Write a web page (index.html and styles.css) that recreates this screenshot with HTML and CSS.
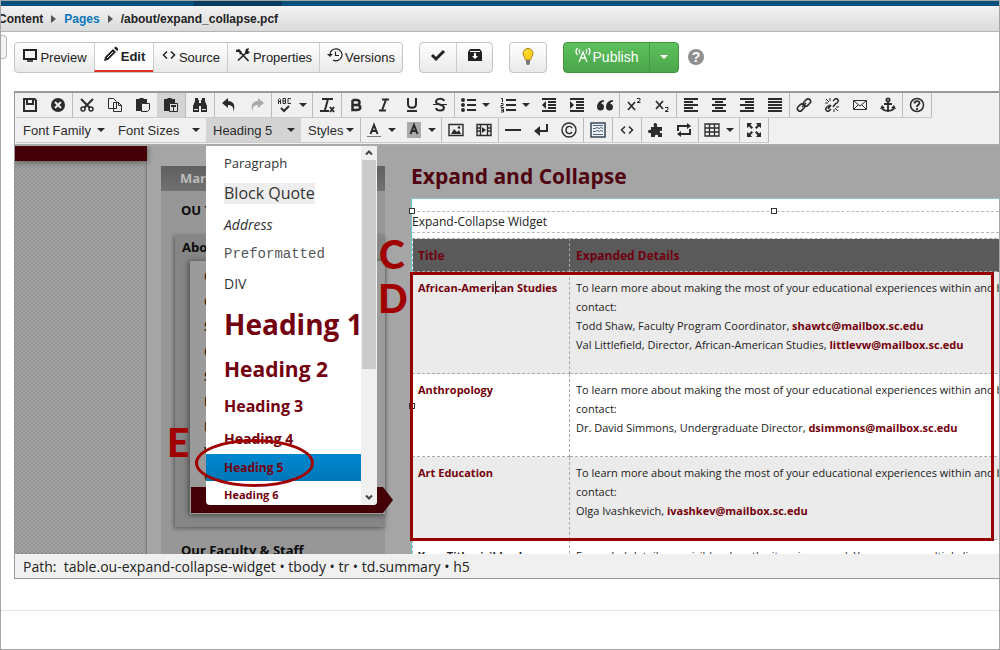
FILE: index.html
```html
<!DOCTYPE html>
<html lang="en">
<head>
<meta charset="utf-8">
<title>/about/expand_collapse.pcf</title>
<link rel="stylesheet" href="styles.css">
</head>
<body>
<svg class="sprite" aria-hidden="true">
  <symbol id="monitor" viewBox="0 0 16 16"><path fill="none" stroke="currentColor" stroke-width="2" d="M2 3h12v9H2z"/><path d="M5 13h6v2H5z" opacity=".8"/></symbol>
  <symbol id="pencil" viewBox="0 0 16 16"><path d="M1 15l1-4 8-8 3 3-8 8zM11 2l1-1c1-1 4 2 3 3l-1 1z"/><path stroke="#fff" d="M4 12l6-6"/></symbol>
  <symbol id="code" viewBox="0 0 16 16"><path fill="none" stroke="currentColor" stroke-width="1.5" d="M6 4.500L2.500 8L6 11.500M10 4.500L13.500 8L10 11.500"/></symbol>
  <symbol id="tools" viewBox="0 0 16 16"><path fill="none" stroke="currentColor" stroke-width="1.700" d="M3 13.500L11 6M6 6l7.500 8"/><path d="M1 3l3-1 3 3-2 3-1-3-3 0zM10 5l1-3 3-1-1 3 2 1-2 2-3 0z"/></symbol>
  <symbol id="history" viewBox="0 0 16 16"><path fill="none" stroke="currentColor" stroke-width="1.200" d="M3 8a6 6 0 1 1 3 5M8.500 4.500v4H12"/><path d="M0 7h6L3 10z"/></symbol>
  <symbol id="check" viewBox="0 0 16 16"><path fill="none" stroke="currentColor" stroke-width="3" d="M2 8l4 4 8-8"/></symbol>
  <symbol id="archive" viewBox="0 0 16 16"><path d="M3 2h10l2 3v9H1V5z"/><path fill="#fff" d="M7 6h2v3h2l-3 3-3-3h2zM3 4h10v1H3z"/></symbol>
  <symbol id="bulb" viewBox="0 0 16 18"><path fill="#ffd21c" stroke="#a8842a" d="M5.500 12C5 9 3 8 3 5.500a5 5 0 0 1 10 0C13 8 11 9 10.500 12z"/><path fill="#777" d="M6 12h4v3l-1 2H7l-1-2z"/><path fill="none" stroke="#fff29a" d="M6 5c0-1 1-2 2-2"/></symbol>
  <symbol id="tower" viewBox="0 0 16 16"><path fill="none" stroke="currentColor" stroke-width="1.300" d="M4 15L8 5l4 10M6 11h4M5 2.500q-1.500 2 0 4M11 2.500q1.500 2 0 4M2.500 1q-3 3.500 0 7M13.500 1q3 3.500 0 7"/></symbol>
  <symbol id="save" viewBox="0 0 16 16"><path d="M1 1h12l2 2v12H1zM3 3v10h10V4l-1-1v5H4V3zM6 3v3h4V3z" fill-rule="evenodd"/></symbol>
  <symbol id="cancel" viewBox="0 0 16 16"><circle cx="8" cy="8" r="7"/><path stroke="#eee" stroke-width="2" d="M5 5l6 6M11 5l-6 6"/></symbol>
  <symbol id="cut" viewBox="0 0 16 16"><path fill="none" stroke="currentColor" stroke-width="2" d="M2 2l9 9M14 2l-9 9"/><g fill="none" stroke="currentColor" stroke-width="1.500"><circle cx="4" cy="12" r="2"/><circle cx="12" cy="12" r="2"/></g></symbol>
  <symbol id="copy" viewBox="0 0 16 16"><path fill="#f0f0f0" stroke="currentColor" d="M1.500 1.500h5l3 3v7h-8zM6.500 5.500h5l3 3v6h-8zM11.500 5.500v3h3"/></symbol>
  <symbol id="paste" viewBox="0 0 16 16"><path d="M1 2h3l1-1h3l1 1h3v4H6v8H1z"/><path fill="#f0f0f0" stroke="currentColor" d="M6.500 6.500h8v6l-2 2h-6z"/></symbol>
  <symbol id="pastetext" viewBox="0 0 16 16"><path d="M1 2h3l1-1h3l1 1h3v4H6v8H1z"/><path fill="#ddd" stroke="currentColor" d="M6.500 6.500h8v8h-8z"/><path d="M8 8h5v2h-2v4h-1v-4H8z"/></symbol>
  <symbol id="find" viewBox="0 0 16 16"><path d="M3 1h3v2h1v3h2V3h1V1h3v3l2 5v6H9V9H7v6H1V9l2-5z"/><path stroke="#eee" d="M2 12.500h4M10 12.500h4"/></symbol>
  <symbol id="undo" viewBox="0 0 16 16"><path d="M1 6l6-5v3c6 0 8 5 5 11 1-5-1-7-5-7v3z"/></symbol>
  <symbol id="redo" viewBox="0 0 16 16"><path d="M15 6L9 1v3C3 4 1 9 4 15c-1-5 1-7 5-7v3z"/></symbol>
  <symbol id="spell" viewBox="0 0 16 16"><path fill="none" stroke="currentColor" d="M1.500 7V2.500l1-1 1 1V7M1.500 4.500h2M6 1.500v5h2.500v-5H6M6 4h2.500M14 2l-1-.500h-2v5h3"/><path fill="none" stroke="currentColor" stroke-width="2" d="M4 11l3 3 5-5"/></symbol>
  <symbol id="clear" viewBox="0 0 16 16"><path fill="none" stroke="currentColor" stroke-width="2" d="M3 2h11M9 2L6 13M1 14h9M11 10l4 5M15 10l-4 5"/></symbol>
  <symbol id="bold" viewBox="0 0 16 16"><path fill="none" stroke="currentColor" stroke-width="2.500" d="M4.500 3h4c4 0 4 5 0 5h-4V3v10h4c5 0 5-5 0-5"/></symbol>
  <symbol id="italic" viewBox="0 0 16 16"><path fill="none" stroke="currentColor" stroke-width="2" d="M6 2.500h7M3 13.500h7M10 2.500l-4 11"/></symbol>
  <symbol id="underline" viewBox="0 0 16 16"><path fill="none" stroke="currentColor" stroke-width="2" d="M4 1v6c0 5 8 5 8 0V1"/><path d="M3 13h10v2H3z"/></symbol>
  <symbol id="strike" viewBox="0 0 16 16"><path fill="none" stroke="currentColor" stroke-width="2" d="M12 4C11 1 4 1 4 5c0 3 8 2 8 5.500 0 4-7 4-8 .500"/><path d="M1 7h14v1H1z"/></symbol>
  <symbol id="bullets" viewBox="0 0 16 16"><circle cx="3" cy="3" r="2"/><circle cx="3" cy="8" r="2"/><circle cx="3" cy="13" r="2"/><path d="M7 2h9v2H7zM7 7h9v2H7zM7 12h9v2H7z"/></symbol>
  <symbol id="numbers" viewBox="0 0 16 16"><path d="M6 2h10v2H6zM6 7h10v2H6zM6 12h10v2H6z"/><path fill="none" stroke="currentColor" d="M1 1.500h1.500V5M1 6.500h2v2H1v2h3M1 12h2.500v3H1M1.500 13.500h2"/></symbol>
  <symbol id="outdent" viewBox="0 0 16 16"><path d="M1 1h14v2H1zM7 4h8v2H7zM7 7h8v2H7zM7 10h8v2H7zM1 13h14v2H1zM5 4v8L1 8z"/></symbol>
  <symbol id="indent" viewBox="0 0 16 16"><path d="M1 1h14v2H1zM7 4h8v2H7zM7 7h8v2H7zM7 10h8v2H7zM1 13h14v2H1zM1 4v8l4-4z"/></symbol>
  <symbol id="quote" viewBox="0 0 16 16"><path d="M7 3C3 3 0 6 0 10a3.500 3.500 0 1 0 4-3.500Q5 5 7 4.500zM16 3c-4 0-7 3-7 7a3.500 3.500 0 1 0 4-3.500q1-1.500 3-2z"/></symbol>
  <symbol id="sup" viewBox="0 0 16 16"><path fill="none" stroke="currentColor" stroke-width="1.700" d="M2 5l7 8M9 5l-7 8"/><path fill="none" stroke="currentColor" d="M11 1.500h3v2l-3 2h3.500"/></symbol>
  <symbol id="sub" viewBox="0 0 16 16"><path fill="none" stroke="currentColor" stroke-width="1.700" d="M2 4l7 8M9 4l-7 8"/><path fill="none" stroke="currentColor" d="M11 10.500h3v2l-3 2h3.500"/></symbol>
  <symbol id="left" viewBox="0 0 16 16"><path d="M1 1h14v2H1zM1 4h9v2H1zM1 7h14v2H1zM1 10h9v2H1zM1 13h14v2H1z"/></symbol>
  <symbol id="center" viewBox="0 0 16 16"><path d="M1 1h14v2H1zM4 4h8v2H4zM1 7h14v2H1zM4 10h8v2H4zM1 13h14v2H1z"/></symbol>
  <symbol id="right" viewBox="0 0 16 16"><path d="M1 1h14v2H1zM6 4h9v2H6zM1 7h14v2H1zM6 10h9v2H6zM1 13h14v2H1z"/></symbol>
  <symbol id="justify" viewBox="0 0 16 16"><path d="M1 1h14v2H1zM1 4h14v2H1zM1 7h14v2H1zM1 10h14v2H1zM1 13h14v2H1z"/></symbol>
  <symbol id="link" viewBox="0 0 16 16"><g fill="none" stroke="currentColor" stroke-width="1.600"><rect x="7" y="3" width="8" height="5" rx="2.500" transform="rotate(-45 11 5.500)"/><rect x="1" y="8" width="8" height="5" rx="2.500" transform="rotate(-45 5 10.500)"/><path d="M6 10l4-4"/></g></symbol>
  <symbol id="unlink" viewBox="0 0 16 16"><g fill="none" stroke="currentColor" stroke-width="1.500"><path d="M9 4l2-2q2-1 3 1 1 1-1 3l-3 2M7 12l-2 2q-2 1-3-1-1-1 1-3l3-2M9 10l3-4M4 12l3-4"/><path stroke-width="1" d="M2 2l3 3M6 1v3M1 6h3M11 11l3 3M10 12v3M12 10h3"/></g></symbol>
  <symbol id="mail" viewBox="0 0 16 16"><path fill="none" stroke="currentColor" d="M1.500 3.500h13v9h-13zM2 4l6 5 6-5M2 12l4-4M14 12l-4-4"/></symbol>
  <symbol id="anchor" viewBox="0 0 16 16"><g fill="none" stroke="currentColor" stroke-width="1.800"><circle cx="8" cy="3" r="1.700"/><path d="M8 5v10M4 7h8M2 10c0 5 12 5 12 0"/></g><path d="M0 12l2-4 3 3zM16 12l-2-4-3 3z"/></symbol>
  <symbol id="help" viewBox="0 0 16 16"><circle cx="8" cy="8" r="6.500" fill="none" stroke="currentColor" stroke-width="1.500"/><path fill="none" stroke="currentColor" stroke-width="1.800" d="M5.500 6.500c0-3 5-3 5-.500C10.500 8 8 7.500 8 10M8 11v2"/></symbol>
  <symbol id="fore" viewBox="0 0 16 16"><path fill="none" stroke="currentColor" stroke-width="2" d="M4.500 12L8 3l3.500 9M5.500 9h5"/><path d="M1 14h14v1H1z" opacity=".6"/></symbol>
  <symbol id="back" viewBox="0 0 16 16"><path fill="#aaa" d="M1 0h14v16H1z"/><path fill="none" stroke="currentColor" stroke-width="2" d="M4.500 12L8 3l3.500 9M5.500 9h5"/></symbol>
  <symbol id="image" viewBox="0 0 16 16"><path fill="none" stroke="currentColor" stroke-width="1.400" d="M1 2.500h14v11H1z"/><path d="M3 12l3-5 3 3 2-2 2 4z"/><circle cx="11" cy="5.500" r="1.300"/></symbol>
  <symbol id="video" viewBox="0 0 16 16"><path fill="none" stroke="currentColor" stroke-width="1.400" d="M1 2.500h14v11H1zM4.500 2v12M11.500 2v12M1 6h3M1 9h3M12 6h3M12 9h3"/><path d="M6 5l4 3-4 3z"/></symbol>
  <symbol id="rule" viewBox="0 0 16 16"><path d="M0 7h16v2H0z"/></symbol>
  <symbol id="enter" viewBox="0 0 16 16"><path d="M13 2h2v8H7v4L1 9l6-5v4h6z"/></symbol>
  <symbol id="copyright" viewBox="0 0 16 16"><g fill="none" stroke="currentColor" stroke-width="1.400"><circle cx="8" cy="8" r="7"/><path d="M11 6c-2-3-6-1.500-6 2s4 5 6 2"/></g></symbol>
  <symbol id="template" viewBox="0 0 16 16"><path fill="#eef3f8" stroke="#345" stroke-width="1.500" d="M1 1h14v14H1z"/><path fill="none" stroke="#567" d="M3 3.500h10M3 12.500h10M3 6.500h2l2-1 2 1 2-1 2 1M3 9.500h2l2-1 2 1 2-1 2 1"/></symbol>
  <symbol id="puzzle" viewBox="0 0 16 16"><path d="M6 5V4c-2-4 4-4 3 0v1h5v4c-3-1-3 3 0 2v4h-4c1-3-4-3-3 0H3v-4c-4 1-4-4 0-3V5z"/></symbol>
  <symbol id="repeat" viewBox="0 0 16 16"><path fill="none" stroke="currentColor" stroke-width="2" d="M2 9V4h10M14 7v5H4"/><path d="M11 1l4 3-4 3zM5 9l-4 3 4 3z"/></symbol>
  <symbol id="table" viewBox="0 0 16 16"><path fill="none" stroke="currentColor" stroke-width="1.300" d="M1 2h14v12H1zM1 6h14M1 10h14M5.500 2v12M10.500 2v12"/></symbol>
  <symbol id="full" viewBox="0 0 16 16"><path d="M1 1h5L4.500 3 7 5.500 5.500 7 3 4.500 1 6zM15 1v5l-2-1.500L10.500 7 9 5.500 11.500 3 10 1zM1 15v-5l2 1.500L5.500 9 7 10.500 4.500 13 6 15zM15 15h-5l1.500-2L9 10.500 10.500 9l2.500 2.500L15 10z"/></symbol>
</svg>

<div class="app">
  <div class="topbar"><div class="topbar-active"></div></div>
  <nav class="crumbs" aria-label="Breadcrumb">
    <span class="crumb-first">Content</span><i class="arrow"></i><a href="#">Pages</a><i class="arrow"></i><span>/about/expand_collapse.pcf</span>
  </nav>

  <div class="actions">
    <div class="side-tab"></div>
    <div class="group">
      <button class="btn preview"><svg><use href="#monitor"/></svg>Preview</button>
      <button class="btn edit"><svg><use href="#pencil"/></svg>Edit</button>
      <button class="btn source"><svg><use href="#code"/></svg>Source</button>
      <button class="btn properties"><svg><use href="#tools"/></svg>Properties</button>
      <button class="btn versions"><svg><use href="#history"/></svg>Versions</button>
    </div>
    <div class="group">
      <button class="btn small" aria-label="Check in"><svg><use href="#check"/></svg></button>
      <button class="btn small" aria-label="Archive"><svg><use href="#archive"/></svg></button>
    </div>
    <div class="group">
      <button class="btn small" aria-label="Hint"><svg class="tall"><use href="#bulb"/></svg></button>
    </div>
    <div class="publish">
      <button class="pub-main"><svg><use href="#tower"/></svg>Publish</button>
      <button class="pub-more" aria-label="More publish options"><i class="caret"></i></button>
    </div>
    <button class="help" aria-label="Help">?</button>
  </div>

  <section class="editor">
    <div class="tools">
      <div class="row">
        <div class="set"><button aria-label="Save"><svg><use href="#save"/></svg></button><button aria-label="Cancel"><svg><use href="#cancel"/></svg></button></div>
        <div class="set"><button aria-label="Cut"><svg><use href="#cut"/></svg></button><button aria-label="Copy"><svg><use href="#copy"/></svg></button><button aria-label="Paste"><svg><use href="#paste"/></svg></button><button class="on" aria-label="Paste as text"><svg><use href="#pastetext"/></svg></button></div>
        <div class="set"><button aria-label="Find"><svg><use href="#find"/></svg></button></div>
        <div class="set"><button aria-label="Undo"><svg><use href="#undo"/></svg></button><button class="off" aria-label="Redo"><svg><use href="#redo"/></svg></button></div>
        <div class="set"><button class="split" aria-label="Spelling"><svg><use href="#spell"/></svg><i class="caret"></i></button></div>
        <div class="set"><button aria-label="Clear formatting"><svg><use href="#clear"/></svg></button></div>
        <div class="set"><button aria-label="Bold"><svg><use href="#bold"/></svg></button><button aria-label="Italic"><svg><use href="#italic"/></svg></button><button aria-label="Underline"><svg><use href="#underline"/></svg></button><button aria-label="Strikethrough"><svg><use href="#strike"/></svg></button></div>
        <div class="set"><button class="split" aria-label="Bullet list"><svg><use href="#bullets"/></svg><i class="caret"></i></button><button class="split" aria-label="Numbered list"><svg><use href="#numbers"/></svg><i class="caret"></i></button><button aria-label="Outdent"><svg><use href="#outdent"/></svg></button><button aria-label="Indent"><svg><use href="#indent"/></svg></button><button aria-label="Quote"><svg><use href="#quote"/></svg></button></div>
        <div class="set"><button aria-label="Superscript"><svg><use href="#sup"/></svg></button><button aria-label="Subscript"><svg><use href="#sub"/></svg></button></div>
        <div class="set"><button aria-label="Align left"><svg><use href="#left"/></svg></button><button aria-label="Align center"><svg><use href="#center"/></svg></button><button aria-label="Align right"><svg><use href="#right"/></svg></button><button aria-label="Justify"><svg><use href="#justify"/></svg></button></div>
        <div class="set"><button aria-label="Link"><svg><use href="#link"/></svg></button><button aria-label="Unlink"><svg><use href="#unlink"/></svg></button><button aria-label="Mail link"><svg><use href="#mail"/></svg></button><button aria-label="Anchor"><svg><use href="#anchor"/></svg></button></div>
        <div class="set"><button aria-label="Editor help"><svg><use href="#help"/></svg></button></div>
      </div>
      <div class="row">
        <div class="set plain"><button class="drop wide">Font Family<i class="caret"></i></button><button class="drop wide">Font Sizes<i class="caret"></i></button><button class="drop wide on">Heading 5<i class="caret"></i></button></div>
        <div class="set"><button class="drop styles">Styles<i class="caret"></i></button></div>
        <div class="set"><button class="split" aria-label="Text color"><svg><use href="#fore"/></svg><i class="caret"></i></button><button class="split" aria-label="Background color"><svg><use href="#back"/></svg><i class="caret"></i></button></div>
        <div class="set"><button aria-label="Image"><svg><use href="#image"/></svg></button><button aria-label="Video"><svg><use href="#video"/></svg></button></div>
        <div class="set"><button aria-label="Horizontal line"><svg><use href="#rule"/></svg></button><button aria-label="Line break"><svg><use href="#enter"/></svg></button><button aria-label="Special character"><svg><use href="#copyright"/></svg></button></div>
        <div class="set"><button aria-label="Template"><svg><use href="#template"/></svg></button></div>
        <div class="set"><button aria-label="Source code"><svg><use href="#code"/></svg></button></div>
        <div class="set"><button aria-label="Component"><svg><use href="#puzzle"/></svg></button><button aria-label="Asset"><svg><use href="#repeat"/></svg></button></div>
        <div class="set"><button class="split" aria-label="Table"><svg><use href="#table"/></svg><i class="caret"></i></button></div>
        <div class="set"><button aria-label="Fullscreen"><svg><use href="#full"/></svg></button></div>
      </div>
    </div>

    <div class="stage">
      <div class="page">
        <div class="backdrop"><div class="band"></div></div>
        <aside class="sidebar">
          <div class="side-head">Marketing</div>
          <p class="side-item">OU Training</p>
          <div class="side-box">
            <p class="side-title">About</p>
            <ul class="side-list">
              <li>Our</li><li>Contact</li><li>Staff</li><li>Calendar</li><li>Support</li><li>Links</li><li>Forms</li><li>Visit</li><li>Careers</li>
              <li class="current"></li>
            </ul>
          </div>
          <p class="side-item">Our Faculty &amp; Staff</p>
        </aside>
        <main class="main">
          <h1>Expand and Collapse</h1>
          <div class="editable">
            <p class="widget-name">Expand-Collapse Widget</p>
            <table>
              <thead><tr><th>Title</th><th>Expanded Details</th></tr></thead>
              <tbody>
                <tr class="odd"><td><b class="name">African-Ameri<i class="cursor"></i>can Studies</b></td><td>To learn more about making the most of your educational experiences within and beyond<br>contact:<br>Todd Shaw, Faculty Program Coordinator, <a href="#">shawtc@mailbox.sc.edu</a><br>Val Littlefield, Director, African-American Studies, <a href="#">littlevw@mailbox.sc.edu</a></td></tr>
                <tr><td><b class="name">Anthropology</b></td><td>To learn more about making the most of your educational experiences within and beyond<br>contact:<br>Dr. David Simmons, Undergraduate Director, <a href="#">dsimmons@mailbox.sc.edu</a></td></tr>
                <tr class="odd"><td><b class="name">Art Education</b></td><td>To learn more about making the most of your educational experiences within and beyond<br>contact:<br>Olga Ivashkevich, <a href="#">ivashkev@mailbox.sc.edu</a></td></tr>
                <tr class="last"><td><b>Your Title visible always</b></td><td>Expanded details are visible when the item is opened. You can use multiple lines.</td></tr>
              </tbody>
            </table>
            <i class="handle h-left"></i><i class="handle h-mid"></i><i class="handle h-low"></i>
          </div>
        </main>
      </div>
      <div class="menu">
        <ul class="formats">
          <li class="f-p">Paragraph</li>
          <li class="f-quote"><span>Block Quote</span></li>
          <li class="f-address">Address</li>
          <li class="f-pre">Preformatted</li>
          <li class="f-div">DIV</li>
          <li class="f-h f-h1">Heading 1</li>
          <li class="f-h f-h2">Heading 2</li>
          <li class="f-h f-h3">Heading 3</li>
          <li class="f-h f-h4">Heading 4</li>
          <li class="f-h f-h5">Heading 5</li>
          <li class="f-h f-h6">Heading 6</li>
        </ul>
        <div class="scroll">
          <svg viewBox="0 0 14 14"><path d="M4 8.500l3-3 3 3"/></svg>
          <div class="track"><div class="thumb"></div></div>
          <svg viewBox="0 0 14 14"><path d="M4 5.500l3 3 3-3"/></svg>
        </div>
      </div>
      <span class="mark mark-c">C</span>
      <span class="mark mark-d">D</span>
      <span class="mark mark-e">E</span>
      <div class="frame-d"></div>
      <div class="ring-e"></div>
    </div>
    <div class="path">Path:&nbsp; table.ou-expand-collapse-widget • tbody • tr • td.summary • h5</div>
  </section>
  <footer class="foot"></footer>
</div>
</body>
</html>
```
FILE: styles.css
```css
* { box-sizing: border-box; }
body { margin: 0; background: #fff; font-family: "Liberation Sans", Arial, sans-serif; color: #222; }
button { margin: 0; padding: 0; border: 0; background: none; font: inherit; color: inherit; }
p, ul, h1 { margin: 0; padding: 0; }
ul { list-style: none; }
svg { width: 16px; height: 16px; fill: currentColor; flex: none; }
.sprite { position: absolute; width: 0; height: 0; }
.app { display: flex; flex-direction: column; min-height: 100vh; border: 1px solid #a5a5a5; overflow: hidden; }

.topbar { height: 5px; background: #03507d; display: flex; padding-left: 193px; }
.topbar-active { width: 88px; background: #073a5e; }
.crumbs { display: flex; align-items: center; height: 26px; font-size: 12px; font-weight: bold; background: linear-gradient(#f2f2f2, #dadada); border-bottom: 1px solid #b5b5b5; overflow: hidden; }
.crumbs a { color: #0b76bd; text-decoration: none; }
.crumb-first { margin-left: -3px; }
.arrow { border: 4px solid transparent; border-left: 5px solid #555; border-right: 0; margin: 0 8px; }

.actions { display: flex; align-items: center; height: 59px; padding-bottom: 9px; font-size: 13px; }
.side-tab { width: 6px; height: 24px; margin: 0 7px 20px 0; border: 1px solid #bbb; border-left: 0; border-radius: 0 4px 4px 0; background: #f3f3f3; }
.group { display: flex; height: 31px; margin-right: 16px; border: 1px solid #c4c4c4; border-radius: 4px; background: linear-gradient(#fff, #e9e9e9); overflow: hidden; }
.btn { display: flex; align-items: center; justify-content: center; gap: 2px; border-left: 1px solid #ccc; }
.btn svg { margin-bottom: 4px; }
.btn:first-child { border-left: 0; }
.preview { width: 79px; }
.edit { width: 59px; font-weight: bold; background: #fff; border-bottom: 2px solid #e03024; }
.source { width: 74px; }
.properties { width: 92px; }
.versions { width: 83px; }
.small { width: 36px; }
.btn .tall { height: 20px; margin: 0; }
.publish { display: flex; height: 31px; border: 1px solid #43963f; border-radius: 4px; background: linear-gradient(#5dc05d, #4ca64b); color: #fff; font-size: 14px; }
.pub-main { display: flex; align-items: center; justify-content: center; gap: 2px; width: 85px; }
.pub-main svg { margin-bottom: 4px; }
.pub-more { width: 29px; border-left: 1px solid #459a44; display: flex; align-items: center; justify-content: center; }
.help { width: 16px; height: 16px; margin-left: 9px; border-radius: 50%; background: #8f8f8f; color: #fff; font-weight: bold; font-size: 14px; line-height: 16px; }
.caret { border: 4px solid transparent; border-top-color: currentColor; border-bottom: 0; }

.editor { margin-left: 13px; border: 1px solid #999; border-right: 0; border-top: 2px solid #999; }
.tools { background: #f0f0f0; height: 53px; padding-left: 1px; border-bottom: 2px solid #aaa; color: #2b2b2b; font-size: 13px; }
.row { display: flex; }
.set { display: flex; height: 25px; border-right: 1px solid #bbb; border-bottom: 1px solid #ccc; }
.set button { width: 28px; display: flex; align-items: center; justify-content: center; }
.set .split { width: 40px; gap: 6px; }
.set .on { background: #d3d3d3; }
.set .off { color: #aaa; }
.plain { border-right: 0; }
.set .drop { justify-content: space-between; padding: 0 6px 0 7px; }
.set .wide { width: 95px; }
.set .styles { width: 59px; }

.stage { position: relative; height: 408px; font-family: "Open Sans", sans-serif; }
.page { display: flex; height: 100%; background: #a5a5a5; overflow: hidden; }
.backdrop { width: 132px; flex: none; background: repeating-conic-gradient(#a5a5a5 0 25%, #949494 0 50%) 0 0 / 4px 4px; box-shadow: inset -1px 0 2px #777; }
.band { height: 15px; background: #430007; box-shadow: 0 1px 6px #555; }
.sidebar { width: 224px; flex: none; margin: 20px 0 0 14px; background: #979797; font-size: 13px; font-weight: bold; color: #0b0b0b; }
.side-head { height: 25px; padding-left: 19px; line-height: 25px; color: #bbb; background: linear-gradient(#606060, #717171); }
.side-item { height: 44px; padding-left: 20px; line-height: 38px; }
.side-box { height: 292px; margin: 0 0 4px 14px; padding-left: 15px; background: #868686; box-shadow: -1px 1px 4px #555; }
.side-title { height: 26px; margin-left: -8px; line-height: 24px; }
.side-list { height: 253px; padding: 3px 0 0 1px; background: #9b9b9b; box-shadow: -2px 0 5px #555, 0 2px 4px #666; color: #3a2010; font-size: 12px; }
.side-list li { height: 25px; padding-left: 13px; line-height: 25px; }
.side-list .current { height: 26px; width: 202px; margin-top: -2px; background: #430007; clip-path: polygon(0 0, 192px 0, 100% 50%, 192px 100%, 0 100%); }

.main { flex: 1; min-width: 0; padding-left: 26px; }
.main h1 { height: 52px; font-size: 21px; line-height: 60px; color: #4f0410; }
.editable { position: relative; height: 380px; padding-top: 12px; background: #fff; border-top: 1px solid #89c9d4; border-left: 1px solid #6fc6d4; }
.widget-name { height: 22px; margin-bottom: 5px; border: 1px dashed #bbb; border-width: 1px 0; font-size: 12px; line-height: 20px; color: #222; }
table { border-collapse: collapse; width: 700px; table-layout: fixed; font-size: 11px; line-height: 19px; color: #222; }
th, td { border: 1px dashed #aaa; padding: 6px 6px 19px; vertical-align: top; text-align: left; white-space: nowrap; }
th:first-child, td:first-child { width: 157px; padding-left: 5px; }
th { height: 33px; padding: 0 6px; vertical-align: middle; background: #5a5a5a; color: #70000f; font-size: 12px; }
.odd { background: #ebebeb; }
td a, .name { color: #73000a; font-weight: bold; text-decoration: none; }
.cursor { display: inline-block; width: 1px; height: 13px; margin-right: -1px; vertical-align: -2px; background: #333; }
.handle { position: absolute; width: 6px; height: 6px; border: 1px solid #333; background: #fff; }
.h-left { left: -3px; top: 9px; }
.h-mid { left: 359px; top: 9px; }
.h-low { left: -3px; top: 204px; }

.menu { position: absolute; left: 191px; top: 0; width: 171px; height: 359px; display: flex; background: #fff; border-radius: 0 0 4px 4px; overflow: hidden; color: #333; font-size: 13px; }
.formats { flex: 1; padding-top: 2px; overflow: hidden; white-space: nowrap; }
.formats li { padding-left: 18px; display: flex; align-items: center; }
.formats .f-p { height: 29px; }
.formats .f-quote { height: 32px; font-size: 16px; }
.f-quote span { background: #eee; line-height: 21px; }
.formats .f-address { height: 31px; font-size: 14px; font-style: italic; }
.formats .f-pre { height: 27px; font-family: "Liberation Mono", monospace; font-size: 14px; color: #555; }
.formats .f-div { height: 32px; font-size: 14px; }
.formats .f-h { font-weight: bold; color: #73000f; }
.formats .f-h1 { height: 50px; font-size: 28px; }
.formats .f-h2 { height: 40px; font-size: 21px; }
.formats .f-h3 { height: 34px; font-size: 16px; }
.formats .f-h4 { height: 31px; font-size: 14px; }
.formats .f-h5 { height: 27px; font-size: 12px; background: linear-gradient(#0088cf, #0077b8); }
.formats .f-h6 { height: 27px; font-size: 11px; }
.scroll { width: 16px; display: flex; flex-direction: column; align-items: center; background: #f0f0f0; padding-bottom: 1px; }
.scroll svg { width: 14px; height: 14px; fill: none; stroke: #444; stroke-width: 2px; }
.track { flex: 1; width: 14px; }
.thumb { height: 209px; background: #cbcbcb; }

.mark { position: absolute; color: #a00000; font-family: Lato, sans-serif; font-size: 39px; font-weight: 900; line-height: 40px; }
.mark-c { left: 364px; top: 88px; }
.mark-d { left: 363px; top: 132px; }
.mark-e { left: 152px; top: 276px; }
.frame-d { position: absolute; left: 395px; right: 5px; top: 126px; height: 269px; border: 3px solid #990000; }
.ring-e { position: absolute; left: 180px; top: 293px; width: 119px; height: 48px; border: 3px solid #a00000; border-radius: 50%; }

.path { height: 24px; padding-left: 8px; line-height: 25px; background: #f0f0f0; font-family: "Open Sans", sans-serif; font-size: 14px; }
.foot { height: 39px; margin-top: auto; border-top: 1px solid #e2e2e2; }
```
